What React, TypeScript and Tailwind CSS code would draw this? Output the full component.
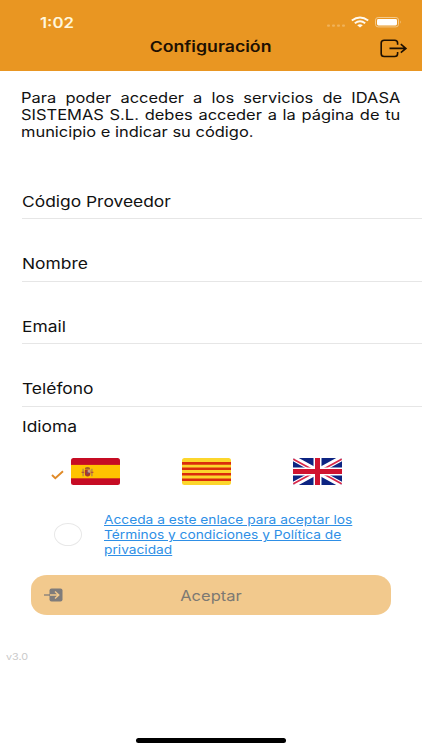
import type { ReactNode } from "react";

const fields = ["Código Proveedor", "Nombre", "Email", "Teléfono"];

function StatusBar() {
    return (
        <div className="flex h-[35px] items-end justify-between pl-10 pr-[20px]">
            <span className="h-[21px] origin-left scale-x-[1.2] text-[14px] font-semibold leading-[18px] text-[#fff7dc]">
                1:02
            </span>
            <svg
                width="76"
                height="16"
                viewBox="0 0 76 16"
                fill="none"
                className="mb-[4px]"
            >
                <g fill="#f0b25a">
                    <rect x="1" y="9.6" width="3" height="2.2" rx="1" />
                    <rect x="6" y="9.6" width="3" height="2.2" rx="1" />
                    <rect x="11" y="9.6" width="3" height="2.2" rx="1" />
                    <rect x="16" y="9.6" width="3" height="2.2" rx="1" />
                </g>
                <g stroke="#fffaf0" strokeWidth="1.9">
                    <path d="M25.8 5.5Q34 -0.6 42.2 5.5" />
                    <path d="M28.8 8.3Q34 4.3 39.2 8.3" />
                </g>
                <path d="M31.2 10.2Q34 8.4 36.8 10.2L34 12.4Z" fill="#fffaf0" />
                <rect x="49.5" y="2.5" width="23" height="9.4" rx="2.6" stroke="#f4c98a" />
                <rect x="51" y="4" width="20" height="6.4" rx="1.4" fill="#fff" />
                <path d="M74 5.6Q75.6 7.2 74 8.8Z" fill="#f4c98a" />
            </svg>
        </div>
    );
}

function ExitIcon() {
    return (
        <svg width="28" height="19" viewBox="0 0 28 19" fill="none" stroke="#1d1002" strokeWidth="1.6">
            <path d="M17.6 5.8V4Q17.6 1.3 14.6 1.3H4.2Q1.2 1.3 1.2 4V14.8Q1.2 17.5 4.2 17.5H14.6Q17.6 17.5 17.6 14.8V13" />
            <path d="M9.5 9.4H25.6M20.8 5.2L25.9 9.4L20.8 13.6" />
        </svg>
    );
}

function SpainFlag() {
    return (
        <svg width="49" height="27" viewBox="0 0 49 27">
            <clipPath id="es">
                <rect width="49" height="27" rx="2.5" />
            </clipPath>
            <g clipPath="url(#es)">
                <rect width="49" height="27" fill="#c60c24" />
                <rect y="6.9" width="49" height="13.4" fill="#ffc400" />
                <path d="M11.4 10.8h1.4v7.4h-1.4zM20.2 10.8h1.4v7.4h-1.4z" fill="#b58a45" />
                <path d="M10.6 13.8h2.6v1.2h-2.6zM19.8 13.8h2.6v1.2h-2.6z" fill="#b5533b" />
                <path d="M13.8 10Q16.5 8.2 19.2 10L18.6 11.6H14.4Z" fill="#a5602a" />
                <path d="M13.9 11.8h5.4v4q0 2.6-2.7 2.6t-2.7-2.6z" fill="#a8382c" />
                <path d="M16.7 11.8h2.6v3h-2.6z" fill="#c9a08c" />
                <circle cx="16.6" cy="14.9" r="1" fill="#6b5568" />
            </g>
        </svg>
    );
}

function CataloniaFlag() {
    return (
        <svg width="49" height="27" viewBox="0 0 49 27">
            <clipPath id="ca">
                <rect width="49" height="27" rx="2.5" />
            </clipPath>
            <g clipPath="url(#ca)">
                <rect width="49" height="27" fill="#fcd62c" />
                <path d="M0 5.4H49M0 10.8H49M0 16.3H49M0 21.8H49" stroke="#da2c0c" strokeWidth="2.6" />
            </g>
        </svg>
    );
}

function UkFlag() {
    return (
        <svg width="49" height="27" viewBox="0 0 49 27">
            <clipPath id="gb">
                <rect width="49" height="27" rx="2" />
            </clipPath>
            <g clipPath="url(#gb)">
                <rect width="49" height="27" fill="#0d2482" />
                <path d="M0 0L49 27M49 0L0 27" stroke="#fff" strokeWidth="5.6" />
                <path d="M0 1L22 13M27 13L49 1M0 26L22 14M27 14L49 26" stroke="#d8284a" strokeWidth="1.7" />
                <path d="M24.5 0V27M0 13.5H49" stroke="#fff" strokeWidth="8" />
                <path d="M24.5 0V27M0 13.5H49" stroke="#d0142f" strokeWidth="5" />
            </g>
        </svg>
    );
}

function Language({ checked, children }: { checked?: boolean; children: ReactNode }) {
    return (
        <button className="flex w-[111px] items-center">
            <span className="w-5">
                {checked && (
                    <svg width="13" height="10" viewBox="0 0 13 10" fill="none" className="mt-1.5">
                        <path d="M1 5L4.3 8.2L12 1.2" stroke="#e08a28" strokeWidth="1.9" />
                    </svg>
                )}
            </span>
            {children}
        </button>
    );
}

export default function App() {
    return (
        <div className="flex h-[750px] w-[422px] flex-col overflow-hidden bg-white font-[Inter,sans-serif] text-[#111]">
            <header className="h-[71px] bg-[#e99622]">
                <StatusBar />
                <div className="grid grid-cols-[1fr_auto_1fr] items-center">
                    <h1 className="col-start-2 scale-x-[1.18] text-[15px] font-semibold leading-[24px] text-[#1d1002]">
                        Configuración
                    </h1>
                    <button className="mr-[14px] justify-self-end pt-0.5">
                        <ExitIcon />
                    </button>
                </div>
            </header>

            <main className="flex flex-col">
                <p className="ml-[21px] mt-[18px] h-[51px] w-[327px] origin-left scale-x-[1.16] text-justify text-[14.2px] leading-[17px]">
                    Para poder acceder a los servicios de IDASA SISTEMAS S.L.
                    debes acceder a la página de tu municipio e indicar su
                    código.
                </p>

                <div className="ml-[22px] mt-[16.5px]">
                    {fields.map((field) => (
                        <div
                            key={field}
                            className="flex h-[62.5px] items-end border-b border-[#e6e6e6] pb-[6.5px]"
                        >
                            <label className="origin-left scale-x-[1.16] text-[15px] leading-[20px]">
                                {field}
                            </label>
                        </div>
                    ))}
                </div>

                <h2 className="ml-[22px] mt-[10.5px] origin-left scale-x-[1.16] text-[15px] leading-[20px]">
                    Idioma
                </h2>

                <div className="ml-[51px] mt-[21px] flex">
                    <Language checked>
                        <SpainFlag />
                    </Language>
                    <Language>
                        <CataloniaFlag />
                    </Language>
                    <Language>
                        <UkFlag />
                    </Language>
                </div>

                <div className="mt-[27px] flex h-[45px] items-center pl-[54px]">
                    <span className="h-[23px] w-7 shrink-0 rounded-[50%] border border-[#e8e8e8]" />
                    <a className="ml-[22px] w-[225px] shrink-0 origin-left scale-x-[1.145] text-[12px] leading-[15px] text-[#2e8fe6] underline">
                        Acceda a este enlace para aceptar los
                        <br />
                        Términos y condiciones y Política de
                        <br />
                        privacidad
                    </a>
                </div>

                <button className="ml-[31px] mt-[18px] grid h-10 w-[360px] grid-cols-[1fr_auto_1fr] items-center rounded-[16px/14px] bg-[#f2c98d] text-[#7d7973]">
                    <svg width="20" height="14" viewBox="0 0 20 14" fill="none" className="ml-[13px]">
                        <rect x="5.5" y="0.5" width="13" height="13" rx="2" fill="#7f7c7b" />
                        <path d="M0 7H6" stroke="#7f7c7b" strokeWidth="1.3" />
                        <path d="M6 7H14.6M11 3.4L14.8 7L11 10.6" stroke="#f2c98d" strokeWidth="1.4" />
                    </svg>
                    <span className="scale-x-[1.14] pt-px text-[14.5px]">Aceptar</span>
                </button>

                <span className="ml-1.5 mt-[36px] origin-left scale-x-[1.2] text-[9px] leading-[12px] text-[#c9c9c9]">
                    v3.0
                </span>
            </main>

            <div className="mb-[7px] mt-auto h-[5px] w-[150px] self-center rounded-full bg-black" />
        </div>
    );
}
